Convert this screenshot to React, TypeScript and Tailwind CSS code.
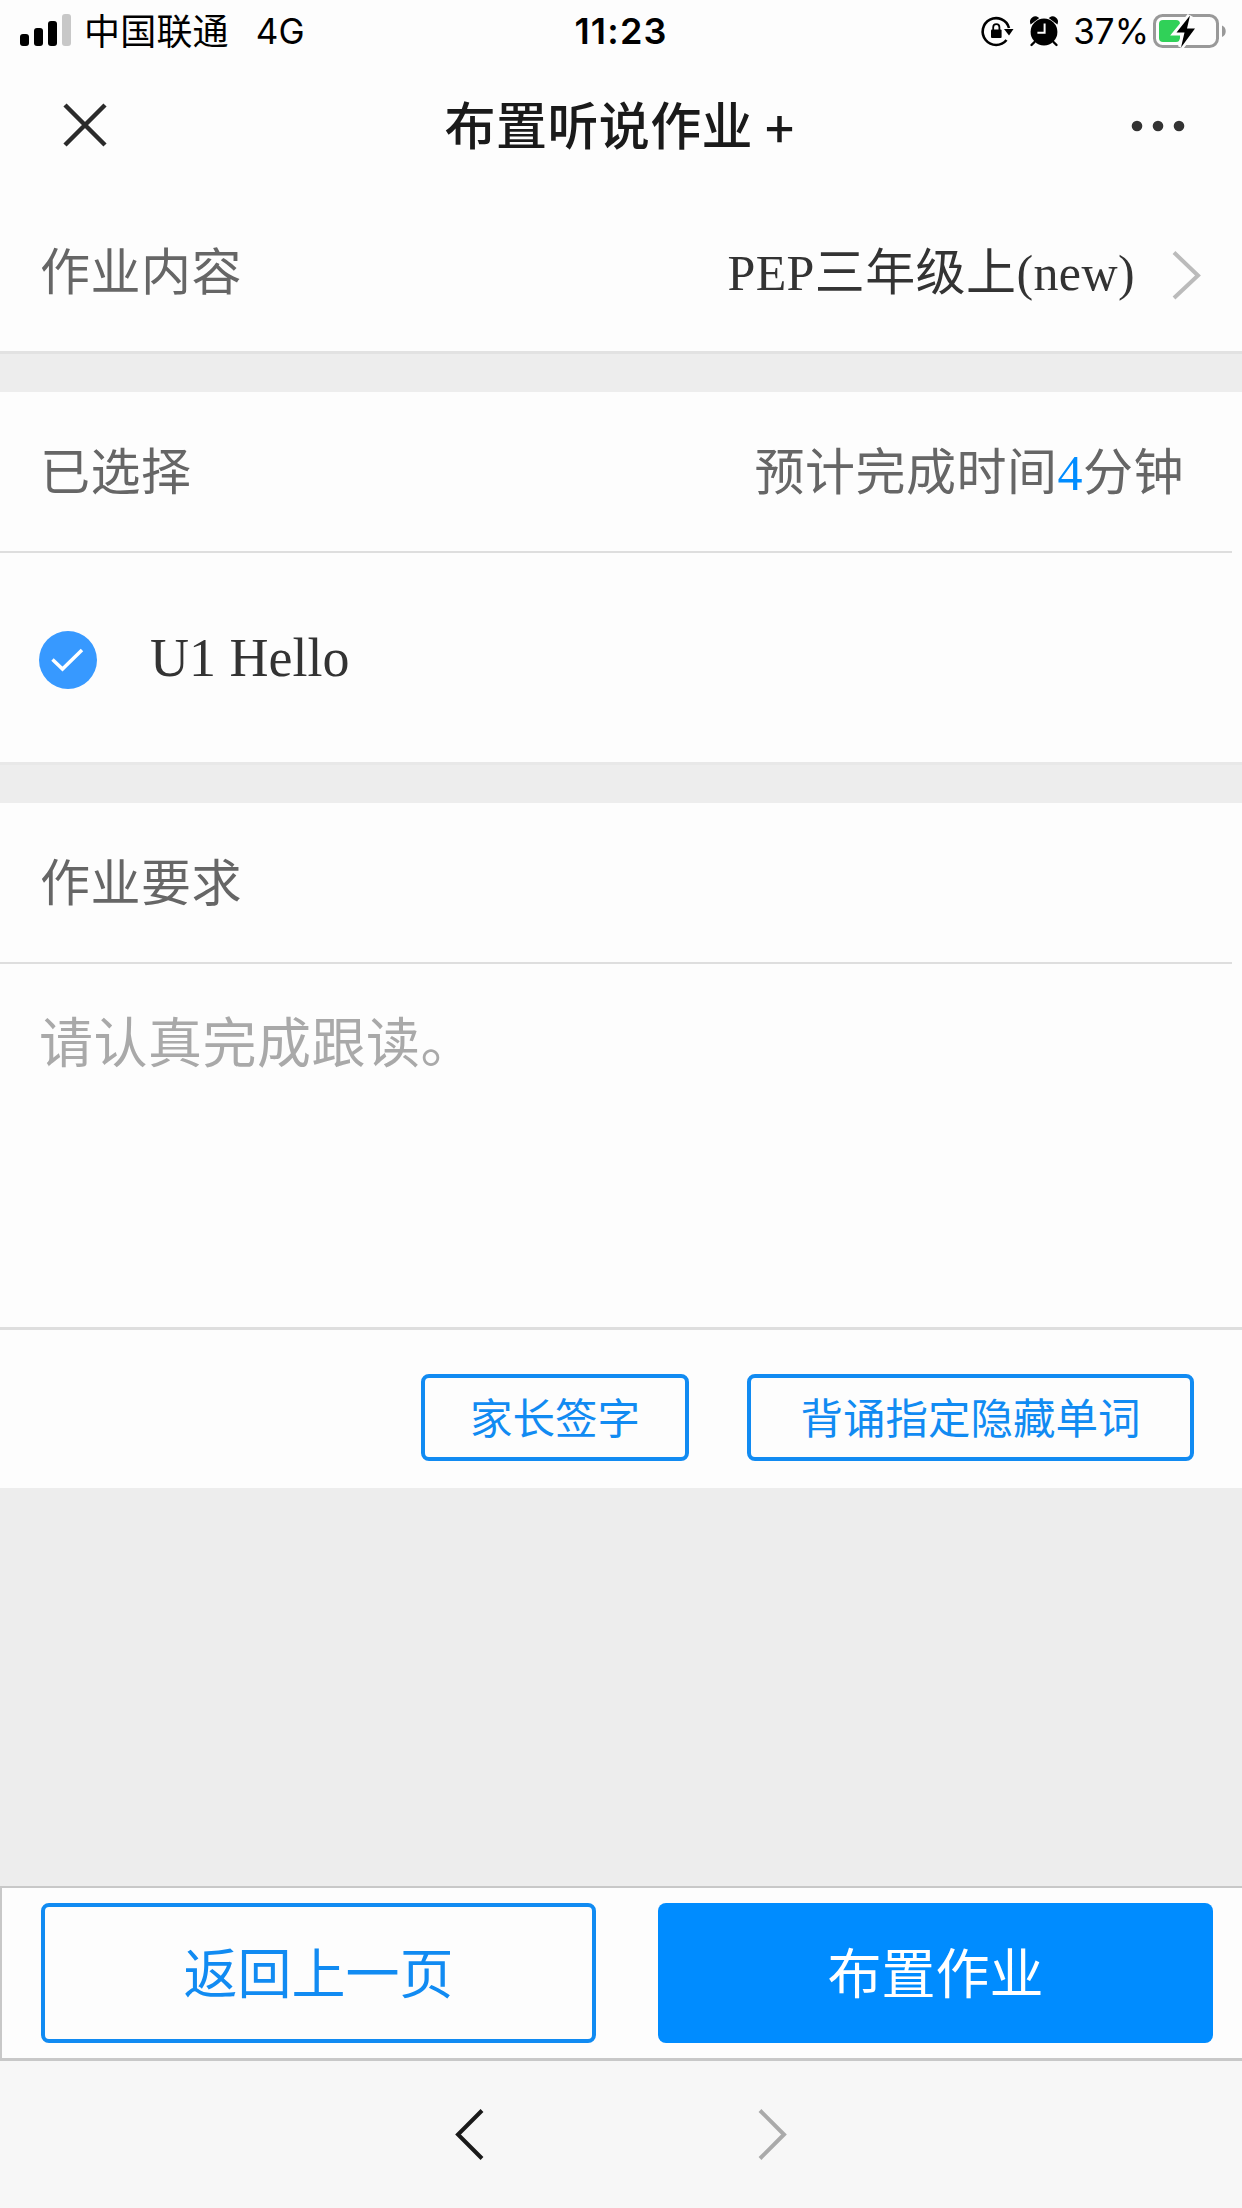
import type { ReactNode } from "react";

function SignalIcon() {
  return (
    <svg width="52" height="34" viewBox="0 0 52 34">
      <rect x="0" y="20" width="9" height="12" rx="3" fill="#000" />
      <rect x="14" y="14" width="9" height="18" rx="3" fill="#000" />
      <rect x="28" y="7" width="9" height="25" rx="3" fill="#000" />
      <rect x="42" y="0" width="9" height="32" rx="3" fill="#c8c8c8" />
    </svg>
  );
}

function RotationLockIcon() {
  return (
    <svg width="34" height="34" viewBox="0 0 34 34" fill="none">
      <path d="M26.5 26A13.4 13.4 0 1 1 29 14" stroke="#000" strokeWidth="2.6" />
      <path d="M24 15h9.500L29 21.500z" fill="#000" />
      <rect x="11" y="15.500" width="10.600" height="8.600" rx="1" fill="#000" />
      <path d="M13.200 16v-2.800a3.100 3.100 0 0 1 6.200 0v2.800" stroke="#000" strokeWidth="1.8" />
    </svg>
  );
}

function AlarmIcon() {
  return (
    <svg width="30" height="32" viewBox="0 0 30 32" fill="none">
      <circle cx="15" cy="17" r="13.4" fill="#000" />
      <path d="M2 8.2A4.6 4.6 0 0 1 9 3z" fill="#000" stroke="#000" strokeWidth="1.5" />
      <path d="M28 8.2A4.6 4.6 0 0 0 21 3z" fill="#000" stroke="#000" strokeWidth="1.5" />
      <path d="M5.5 27 2.5 30M24.5 27l3 3" stroke="#000" strokeWidth="2.4" strokeLinecap="round" />
      <path d="M15.6 8.5v9.3H8.4" stroke="#fdfdfd" strokeWidth="2" />
    </svg>
  );
}

function BatteryIcon() {
  return (
    <svg width="74" height="36" viewBox="0 0 74 36" fill="none">
      <rect x="1.5" y="2.5" width="63" height="31" rx="8" stroke="#999" strokeWidth="3" />
      <path d="M69 12.5c5 2 5 9.500 0 11.500z" fill="#999" />
      <rect x="6" y="7" width="21" height="22" rx="4" fill="#30d158" />
      <path d="M37 3 23.500 19.500h8L28 34 42 15.500h-8z" fill="#000" stroke="#fdfdfd" strokeWidth="6" />
      <path d="M37 2.500 23.500 19.500h8L28 34.500 42 15.500h-8z" fill="#000" />
    </svg>
  );
}

function StatusBar() {
  return (
    <div className="flex h-[62px] items-center px-5 font-[Inter,'Noto_Sans_CJK_SC',sans-serif] text-[35px] leading-none text-black">
      <div className="flex flex-1 items-center">
        <SignalIcon />
        <span className="ml-[12px] pt-[2px] text-[36px] tracking-[0.2px]">中国联通</span>
        <span className="ml-[27px]">4G</span>
      </div>
      <span className="text-[36px] font-semibold tracking-[1.2px]">11:23</span>
      <div className="flex flex-1 items-center justify-end">
        <RotationLockIcon />
        <span className="ml-[15px]"><AlarmIcon /></span>
        <span className="ml-[14px]">37%</span>
        <span className="-mr-[5px] ml-[4px]"><BatteryIcon /></span>
      </div>
    </div>
  );
}

function TitleBar() {
  return (
    <div className="flex h-[128px] items-center justify-between pr-[57px] pl-[62px]">
      <svg width="46" height="46" viewBox="0 0 46 46" stroke="#2b2b2b" strokeWidth="4.500">
        <path d="M3 2l40 40M43 2L3 42" />
      </svg>
      <h1 className="pb-[5px] font-['Noto_Sans_CJK_SC',sans-serif] text-[51px] leading-none font-medium tracking-[0.4px] text-[#1a1a1a]">
        布置听说作业 <span className="relative top-[3px]">+</span>
      </h1>
      <svg width="54" height="12" viewBox="0 0 54 12" fill="#333">
        <circle cx="6" cy="6" r="5.300" />
        <circle cx="27" cy="6" r="5.300" />
        <circle cx="48" cy="6" r="5.300" />
      </svg>
    </div>
  );
}

function SectionTitle({ title, children }: { title: string; children?: ReactNode }) {
  return (
    <div className="mr-[10px] flex items-center justify-between border-b-2 border-[#dedede] pt-[2px] pr-[48px] pl-[40px] text-[50px] leading-none tracking-[0.5px] text-[#666]">
      <span>{title}</span>
      {children}
    </div>
  );
}

const quickTags = [
  { label: "家长签字", className: "w-[268px]" },
  { label: "背诵指定隐藏单词", className: "w-[447px]" },
];

export default function App() {
  return (
    <div className="flex h-[2208px] w-[1242px] flex-col overflow-hidden bg-[#ededed] font-['Liberation_Serif','Noto_Sans_CJK_SC',serif]">
      <header className="bg-[#fdfdfd]">
        <StatusBar />
        <TitleBar />
      </header>

      <div className="flex h-[161px] items-center justify-between bg-[#fdfdfd] pt-[5px] pr-[40px] pl-[40px] text-[50px] leading-none tracking-[0.4px]">
        <span className="tracking-[0.5px] text-[#666]">作业内容</span>
        <div className="flex items-center text-[#333]">
          <span>PEP三年级上(new)</span>
          <svg className="mt-[4px] ml-[36px]" width="31" height="50" viewBox="0 0 31 50" fill="none">
            <path d="M3 2.500L27 25.500L3 48" stroke="#bbb" strokeWidth="4" />
          </svg>
        </div>
      </div>
      <div className="h-[41px] border-t-[3px] border-[#e2e2e2]" />

      <section className="bg-[#fdfdfd]">
        <div className="grid h-[161px]">
          <SectionTitle title="已选择">
            <span>
              预计完成时间<span className="text-[#008cff]">4</span>分钟
            </span>
          </SectionTitle>
        </div>
        <div className="flex h-[209px] items-center pl-[39px]">
          <svg className="mt-[4px]" width="58" height="58" viewBox="0 0 58 58" fill="none">
            <circle cx="29" cy="29" r="29" fill="#3799ff" />
            <path d="M13.500 28.500L23.500 38L43 19" stroke="#fff" strokeWidth="3.500" />
          </svg>
          <span className="ml-[53px] text-[54px] leading-none text-[#333]">U1 Hello</span>
        </div>
      </section>
      <div className="h-[41px] border-t-[3px] border-[#e8e8e8]" />

      <section className="bg-[#fdfdfd]">
        <div className="grid h-[161px]">
          <SectionTitle title="作业要求" />
        </div>
        <div className="h-[363px] px-[39px] pt-[54px] text-[54px] leading-none tracking-[0.5px] text-[#a9a9a9]">
          请认真完成跟读。
        </div>
        <div className="flex h-[161px] items-start justify-end gap-[58px] border-t-[3px] border-[#dedede] pt-[44px] pr-[48px]">
          {quickTags.map((tag) => (
            <button
              key={tag.label}
              className={`flex h-[87px] items-center justify-center rounded-[8px] border-4 border-[#118bf2] pt-[5px] text-[42.500px] leading-none text-[#118bf2] ${tag.className}`}
            >
              {tag.label}
            </button>
          ))}
        </div>
      </section>

      <div className="mt-auto flex h-[175px] justify-between border-t-2 border-b-3 border-l-2 border-[#c8c8c8] bg-[#fdfdfd] pt-[15px] pr-[29px] pl-[39px] text-[54px] leading-none">
        <button className="flex h-[140px] w-[555px] items-center justify-center rounded-[8px] border-4 border-[#118bf2] pt-[6px] text-[#118bf2]">
          返回上一页
        </button>
        <button className="flex h-[140px] w-[555px] items-center justify-center rounded-[8px] bg-[#008cff] pt-[6px] text-white">
          布置作业
        </button>
      </div>

      <nav className="flex h-[147px] items-center justify-center gap-[272px] bg-[#f7f7f7]">
        <svg width="31" height="54" viewBox="0 0 31 54" fill="none">
          <path d="M28 2.500L4 26.500L28 50.500" stroke="#1a1a1a" strokeWidth="4" />
        </svg>
        <svg width="31" height="54" viewBox="0 0 31 54" fill="none">
          <path d="M3 2.500L27 26.500L3 50.500" stroke="#aaa" strokeWidth="4" />
        </svg>
      </nav>
    </div>
  );
}
